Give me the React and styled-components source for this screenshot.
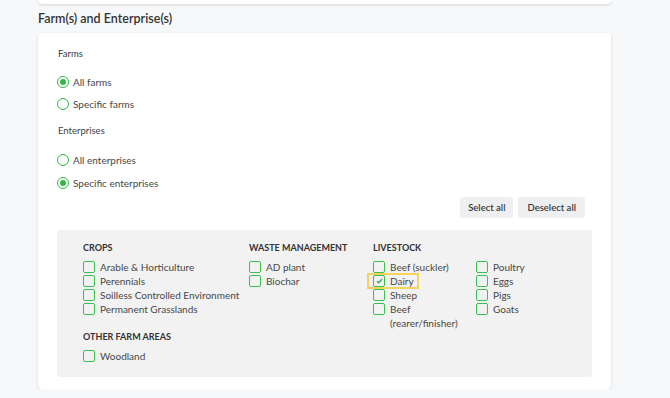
import styled, { createGlobalStyle } from "styled-components";

const GlobalStyle = createGlobalStyle`
  body {
    margin: 0;
    background: #f7f8fa;
    font-family: Lato, "Open Sans", sans-serif;
    color: #474747;
  }
`;

const Page = styled.div`
  width: 573px;
  padding-left: 38px;
`;

const TopCard = styled.div`
  height: 4px;
  background: #ffffff;
  border-radius: 0 0 4px 4px;
  box-shadow: 0 1px 3px rgba(0, 0, 0, 0.15);
`;

const Title = styled.h2`
  margin: 0;
  height: 29px;
  line-height: 29px;
  font-size: 12.5px;
  font-weight: 600;
  color: #333333;
`;

const Card = styled.div`
  background: #ffffff;
  border-radius: 4px;
  box-shadow: 0 1px 3px rgba(0, 0, 0, 0.15);
  padding: 14px 19px 12px 19px;
`;

const Label = styled.div`
  font-size: 9.5px;
  line-height: 14px;
  padding-left: 1px;
  margin-top: ${(props) => props.mt || "0"};
  color: #3d3d3d;
`;

const RadioRow = styled.label`
  display: flex;
  align-items: center;
  gap: 4px;
  height: 14px;
  font-size: 10px;
  margin-top: ${(props) => props.mt || "0"};
`;

const RadioCircle = styled.span`
  box-sizing: border-box;
  width: 12px;
  height: 12px;
  border: 1.5px solid #2fb945;
  border-radius: 50%;
  display: flex;
  align-items: center;
  justify-content: center;
  &::after {
    content: "";
    width: 6px;
    height: 6px;
    border-radius: 50%;
    background: ${(props) => (props.checked ? "#2fb945" : "transparent")};
  }
`;

const ButtonBar = styled.div`
  display: flex;
  justify-content: flex-end;
  gap: 5px;
  margin-top: 7px;
  padding-right: 7px;
`;

const Button = styled.button`
  height: 21px;
  padding: 0 ${(props) => props.px || "8px"};
  border: none;
  border-radius: 3px;
  background: #eeeff0;
  font-family: inherit;
  font-size: 9.5px;
  font-weight: 600;
  color: #3a3a3a;
`;

const Box = styled.div`
  margin-top: 12px;
  background: #f2f2f2;
  border-radius: 3px;
  padding: 12px 26px 12px 26px;
  display: grid;
  grid-template-columns: 166px 124px auto;
  height: 123px;
`;

const Column = styled.div`
  display: flex;
  flex-direction: column;
`;

const GroupTitle = styled.div`
  font-size: 9px;
  font-weight: 700;
  line-height: 12px;
  color: #333333;
  text-transform: uppercase;
  margin-top: ${(props) => props.mt || "0"};
  margin-bottom: 6px;
`;

const Items = styled.div`
  display: grid;
  grid-template-columns: ${(props) => props.cols || "auto"};
  grid-auto-flow: column;
  grid-template-rows: repeat(4, auto);
`;

const Item = styled.label`
  position: relative;
  display: flex;
  align-items: flex-start;
  gap: 5px;
  font-size: 10px;
  line-height: 14px;
  width: fit-content;
  white-space: nowrap;
  ${(props) =>
    props.highlight &&
    `
    &::after {
      content: "";
      position: absolute;
      top: -1px;
      bottom: -1px;
      left: -6px;
      right: -5px;
      border: 2px solid #f6d35f;
    }
  `}
`;

const ItemText = styled.span`
  white-space: ${(props) => (props.wrap ? "normal" : "nowrap")};
  max-width: ${(props) => (props.wrap ? "75px" : "none")};
`;

const Check = styled.span`
  box-sizing: border-box;
  flex: none;
  width: 12px;
  height: 12px;
  margin-top: 1px;
  border: 1.5px solid #3cc04f;
  border-radius: 2px;
  display: flex;
  align-items: center;
  justify-content: center;
`;

function CheckItem({ text, checked, highlight, wrap }) {
  return (
    <Item highlight={highlight}>
      <Check>
        {checked && (
          <svg width="7" height="6" viewBox="0 0 7 6">
            <path d="M1 3.2 L2.7 4.8 L6 1" fill="none" stroke="#2fb945" strokeWidth="1.4" />
          </svg>
        )}
      </Check>
      <ItemText wrap={wrap}>{text}</ItemText>
    </Item>
  );
}

export default function App() {
  return (
    <>
      <GlobalStyle />
      <Page>
        <TopCard />
        <Title>Farm(s) and Enterprise(s)</Title>
        <Card>
          <Label>Farms</Label>
          <RadioRow mt="14px">
            <RadioCircle checked />
            All farms
          </RadioRow>
          <RadioRow mt="8px">
            <RadioCircle />
            Specific farms
          </RadioRow>
          <Label mt="13px">Enterprises</Label>
          <RadioRow mt="15px">
            <RadioCircle />
            All enterprises
          </RadioRow>
          <RadioRow mt="9px">
            <RadioCircle checked />
            Specific enterprises
          </RadioRow>
          <ButtonBar>
            <Button>Select all</Button>
            <Button px="9px">Deselect all</Button>
          </ButtonBar>
          <Box>
            <Column>
              <GroupTitle>Crops</GroupTitle>
              <Items>
                <CheckItem text="Arable & Horticulture" />
                <CheckItem text="Perennials" />
                <CheckItem text="Soilless Controlled Environment" />
                <CheckItem text="Permanent Grasslands" />
              </Items>
              <GroupTitle mt="15px">Other farm areas</GroupTitle>
              <Items>
                <CheckItem text="Woodland" />
              </Items>
            </Column>
            <Column>
              <GroupTitle>Waste management</GroupTitle>
              <Items>
                <CheckItem text="AD plant" />
                <CheckItem text="Biochar" />
              </Items>
            </Column>
            <Column>
              <GroupTitle>Livestock</GroupTitle>
              <Items cols="103px auto">
                <CheckItem text="Beef (suckler)" />
                <CheckItem text="Dairy" checked highlight />
                <CheckItem text="Sheep" />
                <CheckItem text="Beef (rearer/finisher)" wrap />
                <CheckItem text="Poultry" />
                <CheckItem text="Eggs" />
                <CheckItem text="Pigs" />
                <CheckItem text="Goats" />
              </Items>
            </Column>
          </Box>
        </Card>
      </Page>
    </>
  );
}
